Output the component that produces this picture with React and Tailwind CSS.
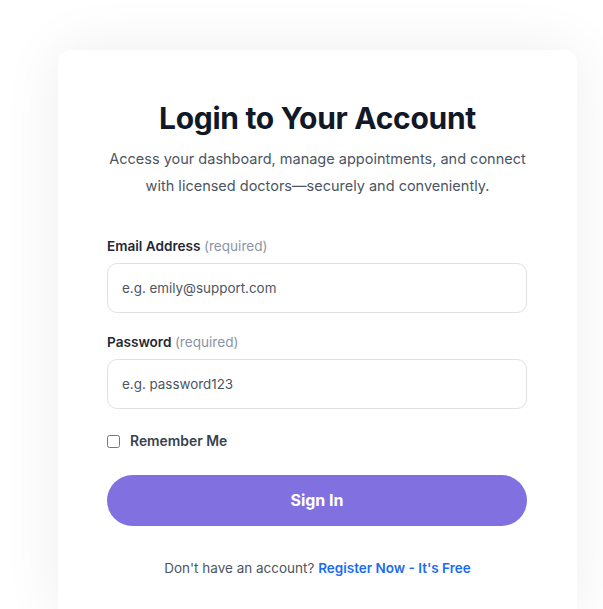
export default function App() {
  return (
    <div
      className="min-h-screen bg-white pl-[58px] pt-[50px]"
      style={{ fontFamily: "Inter, 'Liberation Sans', sans-serif" }}
    >
      <div className="w-[519px] rounded-xl bg-white px-[49px] pb-10 pt-[44px] shadow-[0_0_60px_rgba(0,0,0,0.07)]">
        {/* Header */}
        <h1 className="text-center text-[30px] font-bold leading-[48px] tracking-[-0.3px] text-[#111827]">
          Login to Your Account
        </h1>
        <p className="mt-[3px] whitespace-nowrap text-center text-[14.5px] leading-[27px] text-[#4b5563]">
          Access your dashboard, manage appointments, and connect
          <br />
          with licensed doctors—securely and conveniently.
        </p>

        {/* Form */}
        <form className="mt-[37px]" onSubmit={(e) => e.preventDefault()}>
          <label className="block text-[13.6px] font-semibold leading-5 text-[#1f2937]">
            Email Address{" "}
            <span className="font-normal text-[#8a94a6]">(required)</span>
          </label>
          <input
            type="email"
            placeholder="e.g. emily@support.com"
            className="mt-[7px] block h-[50px] w-[420px] rounded-[10px] border border-[#dfe1e6] px-[14px] text-[13.4px] text-[#374151] placeholder:text-[#4b5563] outline-none"
          />

          <label className="mt-[19px] block text-[13.6px] font-semibold leading-5 text-[#1f2937]">
            Password{" "}
            <span className="font-normal text-[#8a94a6]">(required)</span>
          </label>
          <input
            type="password"
            placeholder="e.g. password123"
            className="mt-[7px] block h-[50px] w-[420px] rounded-[10px] border border-[#dfe1e6] px-[14px] text-[13.4px] text-[#374151] placeholder:text-[#4b5563] outline-none"
          />

          <label className="mt-[22px] flex items-center gap-[10px]">
            <input type="checkbox" className="h-[13px] w-[13px]" />
            <span className="text-[13.9px] font-semibold text-[#374151]">
              Remember Me
            </span>
          </label>

          <button
            type="submit"
            className="mt-[23px] h-[51px] w-[420px] rounded-full bg-[#8171e0] text-[16px] font-bold text-white"
          >
            Sign In
          </button>

          <p className="mt-[32px] text-center text-[13.5px] text-[#4b5563]">
            Don't have an account?{" "}
            <a href="#" className="font-semibold text-[#1a6cf2]">
              Register Now - It's Free
            </a>
          </p>
        </form>
      </div>
    </div>
  );
}
